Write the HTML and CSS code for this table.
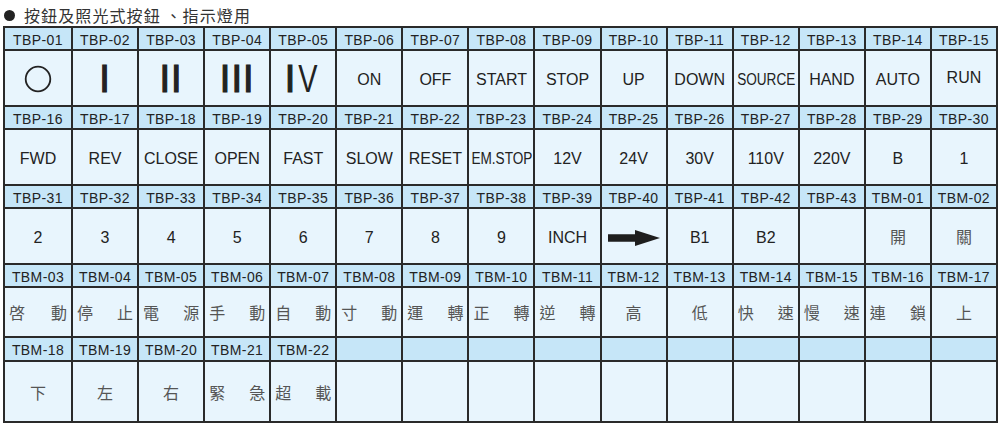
FILE: index.html
```html
<!DOCTYPE html>
<html lang="zh-Hant">
<head>
<meta charset="utf-8">
<title>按鈕及照光式按鈕、指示燈用</title>
<link rel="stylesheet" href="styles.css">
</head>
<body>
<h1 class="title"><span class="dot"></span>按鈕及照光式按鈕 、指示燈用</h1>
<div class="grid">
  <div class="hd">TBP-01</div><div class="hd">TBP-02</div><div class="hd">TBP-03</div><div class="hd">TBP-04</div><div class="hd">TBP-05</div>
  <div class="hd">TBP-06</div><div class="hd">TBP-07</div><div class="hd">TBP-08</div><div class="hd">TBP-09</div><div class="hd">TBP-10</div>
  <div class="hd">TBP-11</div><div class="hd">TBP-12</div><div class="hd">TBP-13</div><div class="hd">TBP-14</div><div class="hd">TBP-15</div>

  <div class="ct icon"><svg width="28" height="28" viewBox="0 0 28 28"><circle cx="14" cy="14" r="12.3" fill="none" stroke="#222" stroke-width="1.8"/></svg></div>
  <div class="ct rn">I</div>
  <div class="ct rn">II</div>
  <div class="ct rn">III</div>
  <div class="ct rn"><span class="i">I</span><span class="v">V</span></div>
  <div class="ct">ON</div><div class="ct">OFF</div><div class="ct">START</div><div class="ct">STOP</div><div class="ct">UP</div>
  <div class="ct">DOWN</div><div class="ct"><span class="cond">SOURCE</span></div><div class="ct">HAND</div><div class="ct">AUTO</div><div class="ct run">RUN</div>

  <div class="hd">TBP-16</div><div class="hd">TBP-17</div><div class="hd">TBP-18</div><div class="hd">TBP-19</div><div class="hd">TBP-20</div>
  <div class="hd">TBP-21</div><div class="hd">TBP-22</div><div class="hd">TBP-23</div><div class="hd">TBP-24</div><div class="hd">TBP-25</div>
  <div class="hd">TBP-26</div><div class="hd">TBP-27</div><div class="hd">TBP-28</div><div class="hd">TBP-29</div><div class="hd">TBP-30</div>

  <div class="ct">FWD</div><div class="ct">REV</div><div class="ct">CLOSE</div><div class="ct">OPEN</div><div class="ct">FAST</div>
  <div class="ct">SLOW</div><div class="ct">RESET</div><div class="ct"><span class="cond">EM.STOP</span></div><div class="ct">12V</div><div class="ct">24V</div>
  <div class="ct">30V</div><div class="ct">110V</div><div class="ct">220V</div><div class="ct">B</div><div class="ct">1</div>

  <div class="hd">TBP-31</div><div class="hd">TBP-32</div><div class="hd">TBP-33</div><div class="hd">TBP-34</div><div class="hd">TBP-35</div>
  <div class="hd">TBP-36</div><div class="hd">TBP-37</div><div class="hd">TBP-38</div><div class="hd">TBP-39</div><div class="hd">TBP-40</div>
  <div class="hd">TBP-41</div><div class="hd">TBP-42</div><div class="hd">TBP-43</div><div class="hd">TBM-01</div><div class="hd">TBM-02</div>

  <div class="ct">2</div><div class="ct">3</div><div class="ct">4</div><div class="ct">5</div><div class="ct">6</div>
  <div class="ct">7</div><div class="ct">8</div><div class="ct">9</div><div class="ct">INCH</div>
  <div class="ct"><svg width="52" height="16" viewBox="0 0 52 16"><path d="M0 4.2H27V0L52 8L27 16V11.8H0Z" fill="#1e1e1e"/></svg></div>
  <div class="ct">B1</div><div class="ct">B2</div><div class="ct"></div><div class="ct zh">開</div><div class="ct zh">關</div>

  <div class="hd">TBM-03</div><div class="hd">TBM-04</div><div class="hd">TBM-05</div><div class="hd">TBM-06</div><div class="hd">TBM-07</div>
  <div class="hd">TBM-08</div><div class="hd">TBM-09</div><div class="hd">TBM-10</div><div class="hd">TBM-11</div><div class="hd">TBM-12</div>
  <div class="hd">TBM-13</div><div class="hd">TBM-14</div><div class="hd">TBM-15</div><div class="hd">TBM-16</div><div class="hd">TBM-17</div>

  <div class="ct zh pair"><span>啓</span><span>動</span></div>
  <div class="ct zh pair"><span>停</span><span>止</span></div>
  <div class="ct zh pair"><span>電</span><span>源</span></div>
  <div class="ct zh pair"><span>手</span><span>動</span></div>
  <div class="ct zh pair"><span>自</span><span>動</span></div>
  <div class="ct zh pair"><span>寸</span><span>動</span></div>
  <div class="ct zh pair"><span>運</span><span>轉</span></div>
  <div class="ct zh pair"><span>正</span><span>轉</span></div>
  <div class="ct zh pair"><span>逆</span><span>轉</span></div>
  <div class="ct zh">高</div>
  <div class="ct zh">低</div>
  <div class="ct zh pair"><span>快</span><span>速</span></div>
  <div class="ct zh pair"><span>慢</span><span>速</span></div>
  <div class="ct zh pair"><span>連</span><span>鎖</span></div>
  <div class="ct zh">上</div>

  <div class="hd">TBM-18</div><div class="hd">TBM-19</div><div class="hd">TBM-20</div><div class="hd">TBM-21</div><div class="hd">TBM-22</div>
  <div class="hd"></div><div class="hd"></div><div class="hd"></div><div class="hd"></div><div class="hd"></div>
  <div class="hd"></div><div class="hd"></div><div class="hd"></div><div class="hd"></div><div class="hd"></div>

  <div class="ct zh">下</div>
  <div class="ct zh">左</div>
  <div class="ct zh">右</div>
  <div class="ct zh pair"><span>緊</span><span>急</span></div>
  <div class="ct zh pair"><span>超</span><span>載</span></div>
  <div class="ct"></div><div class="ct"></div><div class="ct"></div><div class="ct"></div><div class="ct"></div>
  <div class="ct"></div><div class="ct"></div><div class="ct"></div><div class="ct"></div><div class="ct"></div>
</div>
</body>
</html>
```
FILE: styles.css
```css
html, body {
  margin: 0;
  padding: 0;
  background: #ffffff;
}

body {
  font-family: "Liberation Sans", Arial, sans-serif;
  color: #222;
}

.title {
  margin: 0;
  box-sizing: border-box;
  height: 26px;
  padding: 4px 0 0 4px;
  display: flex;
  align-items: center;
  font: 400 16px/1 "Noto Sans CJK TC", sans-serif;
  letter-spacing: 1.1px;
  color: #333;
}

.dot {
  display: inline-block;
  width: 11px;
  height: 11px;
  border-radius: 50%;
  background: #222;
  margin-right: 9px;
  margin-top: 1px;
}

.grid {
  box-sizing: border-box;
  margin-left: 3px;
  width: 995px;
  display: grid;
  grid-template-columns: 66px repeat(14, 1fr);
  grid-template-rows: 21px 54px 21px 54px 21px 54px 21px 48px 22px 59px;
  gap: 2px;
  padding: 2px;
  background: #2a2a2a;
}

.hd {
  background: #c6e6f8;
  display: flex;
  align-items: center;
  justify-content: center;
  padding-top: 2px;
  font-size: 14px;
  letter-spacing: 0.4px;
  color: #222;
  white-space: nowrap;
}

.ct {
  background: #e8f5fd;
  display: flex;
  align-items: center;
  justify-content: center;
  padding-top: 3px;
  font-size: 16px;
  color: #222;
  white-space: nowrap;
  min-width: 0;
}

.icon {
  padding-top: 2px;
}

.run {
  padding-top: 0;
}

.cond {
  display: inline-block;
  transform: scaleX(0.85);
}

.rn {
  font-size: 38px;
  font-weight: 400;
  line-height: 1;
  padding-top: 2px;
  letter-spacing: 1px;
  -webkit-text-stroke: 1.2px #222;
}

.rn .i {
  margin-right: -1px;
}

.rn .v {
  display: inline-block;
  -webkit-text-stroke: 0;
  transform: scaleX(0.76);
}

.zh {
  font-family: "Noto Sans CJK TC", sans-serif;
  font-size: 16px;
  color: #555;
  padding-top: 0;
}

.pair {
  justify-content: space-between;
  padding: 0 4px;
}
```
